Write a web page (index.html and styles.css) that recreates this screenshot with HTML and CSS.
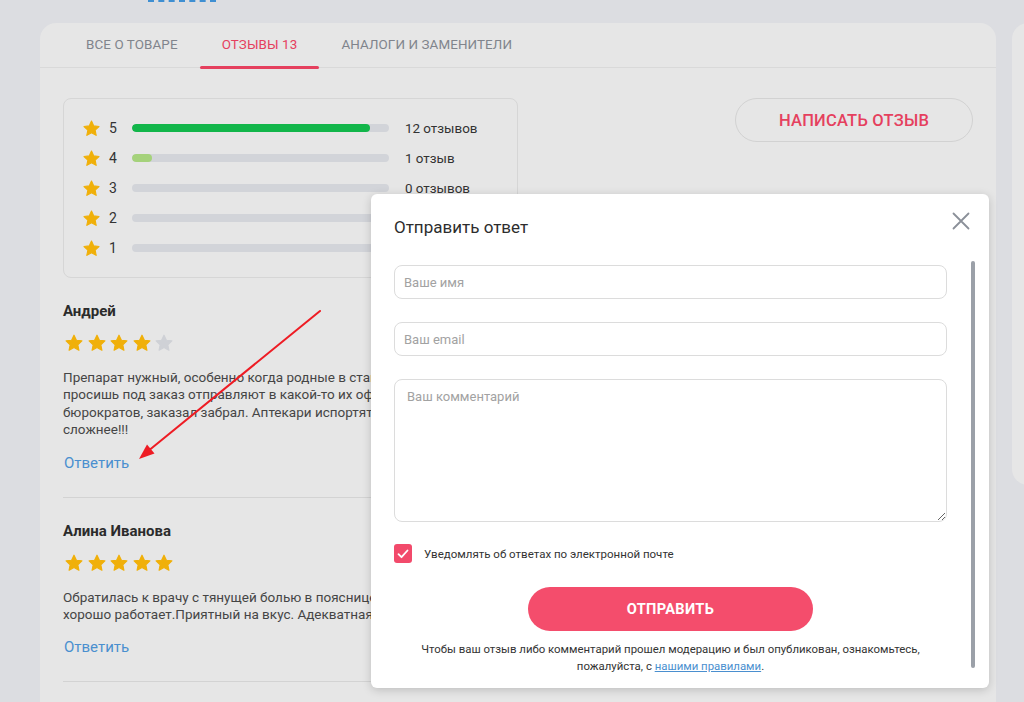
FILE: index.html
```html
<!DOCTYPE html>
<html lang="ru">
<head>
<meta charset="utf-8">
<title>Отзывы</title>
<link rel="stylesheet" href="styles.css">
</head>
<body>
<svg width="0" height="0" class="defs">
  <defs>
    <symbol id="star" viewBox="0 0 24 24">
      <path d="M12 2.6l2.9 6.1 6.6.8-4.9 4.6 1.3 6.6L12 17.4l-5.9 3.3 1.3-6.6-4.9-4.6 6.6-.8z" stroke-linejoin="round" stroke-width="1.4"/>
    </symbol>
  </defs>
</svg>

<div class="topline"><span class="toplink"></span></div>

<div class="layout">
  <main class="card">
    <nav class="tabs">
      <a class="tab">Все о товаре</a>
      <a class="tab active">Отзывы 13</a>
      <a class="tab">Аналоги и заменители</a>
    </nav>

    <div class="card-body">
      <div class="summary">
        <div class="rating">
          <div class="rrow">
            <svg class="rstar"><use href="#star"/></svg>
            <span class="rnum">5</span>
            <span class="bar"><span class="fill green" style="width:92.6%"></span></span>
            <span class="rcount">12 отзывов</span>
          </div>
          <div class="rrow">
            <svg class="rstar"><use href="#star"/></svg>
            <span class="rnum">4</span>
            <span class="bar"><span class="fill light" style="width:7.8%"></span></span>
            <span class="rcount">1 отзыв</span>
          </div>
          <div class="rrow">
            <svg class="rstar"><use href="#star"/></svg>
            <span class="rnum">3</span>
            <span class="bar"></span>
            <span class="rcount">0 отзывов</span>
          </div>
          <div class="rrow">
            <svg class="rstar"><use href="#star"/></svg>
            <span class="rnum">2</span>
            <span class="bar"></span>
            <span class="rcount">0 отзывов</span>
          </div>
          <div class="rrow">
            <svg class="rstar"><use href="#star"/></svg>
            <span class="rnum">1</span>
            <span class="bar"></span>
            <span class="rcount">0 отзывов</span>
          </div>
        </div>
        <button class="write-btn">Написать отзыв</button>
      </div>

      <article class="review">
        <div class="rname">Андрей</div>
        <div class="stars">
          <svg class="star"><use href="#star"/></svg>
          <svg class="star"><use href="#star"/></svg>
          <svg class="star"><use href="#star"/></svg>
          <svg class="star"><use href="#star"/></svg>
          <svg class="star off"><use href="#star"/></svg>
        </div>
        <p class="rtext">Препарат нужный, особенно когда родные в стационаре, а в аптеках его не найти. Когда<br>просишь под заказ отправляют в какой-то их офис, там ещё приходится ждать у<br>бюрократов, заказал забрал. Аптекари испортят любое дело, а без них было бы ещё<br>сложнее!!!</p>
        <a class="reply">Ответить</a>
      </article>

      <article class="review">
        <div class="rname">Алина Иванова</div>
        <div class="stars">
          <svg class="star"><use href="#star"/></svg>
          <svg class="star"><use href="#star"/></svg>
          <svg class="star"><use href="#star"/></svg>
          <svg class="star"><use href="#star"/></svg>
          <svg class="star"><use href="#star"/></svg>
        </div>
        <p class="rtext">Обратилась к врачу с тянущей болью в пояснице, назначили этот препарат. Очень<br>хорошо работает.Приятный на вкус. Адекватная цена.</p>
        <a class="reply">Ответить</a>
      </article>
    </div>
  </main>

  <aside class="side"></aside>
</div>

<svg class="arrow" width="1024" height="702" viewBox="0 0 1024 702">
  <line x1="320" y1="311" x2="150" y2="449.5" stroke="#ee1c24" stroke-width="2" stroke-linecap="round"/>
  <polygon points="139,459 154.5,453.5 147,444.5" fill="#ee1c24"/>
</svg>

<div class="modal">
  <h2 class="mtitle">Отправить ответ</h2>
  <button class="close" aria-label="Закрыть">
    <svg width="18" height="18" viewBox="0 0 18 18"><path d="M1.5 1.5l15 15M16.5 1.5l-15 15" stroke="#8b9099" stroke-width="1.8" stroke-linecap="round"/></svg>
  </button>
  <form class="mform">
    <input class="field" type="text" placeholder="Ваше имя">
    <input class="field" type="text" placeholder="Ваш email">
    <textarea class="field area" placeholder="Ваш комментарий"></textarea>
    <label class="check">
      <span class="box"><svg width="12" height="10" viewBox="0 0 12 10"><path d="M1.5 5.2l3 3L10.5 1.5" fill="none" stroke="#fff" stroke-width="1.8" stroke-linecap="round" stroke-linejoin="round"/></svg></span>
      <span class="clabel">Уведомлять об ответах по электронной почте</span>
    </label>
    <button type="button" class="send">Отправить</button>
    <p class="note">Чтобы ваш отзыв либо комментарий прошел модерацию и был опубликован, ознакомьтесь,<br>пожалуйста, с <a class="rules">нашими правилами</a>.</p>
  </form>
</div>
</body>
</html>
```

FILE: styles.css
```css
html, body {
  margin: 0;
  padding: 0;
  overflow: hidden;
  height: 702px;
}
body {
  background: #dcdde1;
  font-family: Roboto, "Liberation Sans", Arial, sans-serif;
  color: #333;
  position: relative;
}
.defs { position: absolute; }

.topline {
  height: 23px;
}
.toplink {
  display: block;
  margin-left: 148px;
  width: 68px;
  border-top: 2px dashed #3f8fd2;
}

.layout {
  display: flex;
  gap: 16px;
  padding-left: 40px;
  width: 1400px;
}

.card {
  width: 956px;
  flex: none;
  background: #e6e6e6;
  border-radius: 16px 16px 0 0;
  height: 679px;
}
.side {
  width: 300px;
  flex: none;
  height: 462px;
  background: #e6e6e6;
  border-radius: 16px;
}

.tabs {
  display: flex;
  padding-left: 24px;
  height: 44px;
  border-bottom: 1px solid #d9d9d9;
}
.tab {
  position: relative;
  padding: 0 22px;
  font-size: 13.4px;
  line-height: 44px;
  text-transform: uppercase;
  color: #80848c;
  letter-spacing: 0.1px;
}
.tab.active {
  color: #e5405e;
}
.tab.active::after {
  content: "";
  position: absolute;
  left: 0;
  right: 0;
  bottom: -2px;
  height: 3px;
  border-radius: 2px;
  background: #e5405e;
}

.card-body {
  padding: 30px 23px 0 23px;
}

.summary {
  display: flex;
  justify-content: space-between;
  align-items: flex-start;
}
.rating {
  width: 415px;
  padding: 14px 19px;
  border: 1px solid #d6d6d6;
  border-radius: 8px;
}
.rrow {
  display: flex;
  align-items: center;
  height: 30px;
}
.rstar {
  width: 19px;
  height: 19px;
  fill: #f0b00a;
  stroke: #f0b00a;
  margin-right: 8px;
  margin-left: -1px;
}
.rnum {
  width: 23px;
  font-size: 14px;
  color: #333;
}
.bar {
  position: relative;
  width: 257px;
  height: 8px;
  border-radius: 4px;
  background: #d2d4d9;
  overflow: hidden;
}
.fill {
  display: block;
  height: 100%;
  border-radius: 4px;
}
.fill.green { background: #12b64a; }
.fill.light { background: #a5d27b; }
.rcount {
  margin-left: 16px;
  font-size: 13.4px;
  color: #333;
}

.write-btn {
  width: 238px;
  height: 44px;
  border: 1px solid #d2d2d2;
  border-radius: 22px;
  background: transparent;
  font-family: inherit;
  font-size: 16.5px;
  font-weight: 500;
  color: #e5405e;
  text-transform: uppercase;
  letter-spacing: 0.2px;
}

.review {
  padding: 23px 0 24px;
  border-bottom: 1px solid #d3d3d3;
  margin-right: 300px;
}
.rname {
  font-size: 15px;
  font-weight: 700;
  line-height: 20px;
  color: #2b2b2b;
}
.stars {
  display: flex;
  gap: 2.6px;
  margin-top: 12px;
  height: 20px;
  padding-left: 1px;
}
.star {
  width: 20px;
  height: 20px;
  fill: #f0b00a;
  stroke: #f0b00a;
}
.star.off {
  fill: #cfd1d6;
  stroke: #cfd1d6;
}
.rtext {
  margin: 16px 0 0;
  font-size: 13.5px;
  line-height: 17.4px;
  color: #454545;
  white-space: nowrap;
}
.reply {
  display: block;
  margin-top: 14px;
  padding-left: 1px;
  font-size: 15px;
  line-height: 20px;
  color: #4a8fcf;
}

.arrow {
  position: absolute;
  left: 0;
  top: 0;
  pointer-events: none;
}

.modal {
  position: absolute;
  left: 371px;
  top: 194px;
  width: 618px;
  height: 494px;
  box-sizing: border-box;
  padding: 21px 42px 0 23px;
  background: #fff;
  border-radius: 6px;
  box-shadow: 0 2px 10px rgba(0, 0, 0, 0.18);
}
.modal::after {
  content: "";
  position: absolute;
  left: 600px;
  top: 67px;
  width: 4px;
  height: 407px;
  border-radius: 2px;
  background: #9ba0a8;
}
.mtitle {
  margin: 0;
  font-size: 17px;
  font-weight: 400;
  line-height: 24px;
  color: #2d2d2d;
}
.close {
  position: absolute;
  right: 19px;
  top: 18px;
  width: 18px;
  height: 18px;
  padding: 0;
  border: 0;
  background: none;
}
.mform {
  display: flex;
  flex-direction: column;
  margin-top: 26px;
}
.field {
  box-sizing: border-box;
  width: 553px;
  height: 34px;
  margin: 0 0 23px;
  padding: 0 9px;
  border: 1px solid #dcdcdc;
  border-radius: 8px;
  font-family: inherit;
  font-size: 13px;
  color: #333;
  background: #fff;
  outline: none;
}
.field::placeholder {
  color: #a2a2a2;
}
.area {
  height: 143px;
  padding: 9px 12px;
  resize: both;
  margin-bottom: 22px;
}
.check {
  display: flex;
  align-items: center;
  gap: 12px;
  height: 19px;
}
.box {
  width: 18px;
  height: 19px;
  border-radius: 3px;
  background: #f24a6b;
  display: flex;
  align-items: center;
  justify-content: center;
}
.clabel {
  font-size: 11.5px;
  color: #333;
}
.send {
  align-self: center;
  width: 285px;
  height: 44px;
  margin-top: 24px;
  border: 0;
  border-radius: 22px;
  background: #f44d6c;
  color: #fff;
  font-family: inherit;
  font-size: 14.6px;
  font-weight: 700;
  text-transform: uppercase;
  letter-spacing: 0.3px;
}
.note {
  margin: 10px 0 0;
  font-size: 11.4px;
  line-height: 17px;
  text-align: center;
  color: #333;
}
.rules {
  color: #4a8fcf;
  text-decoration: underline;
}
```
